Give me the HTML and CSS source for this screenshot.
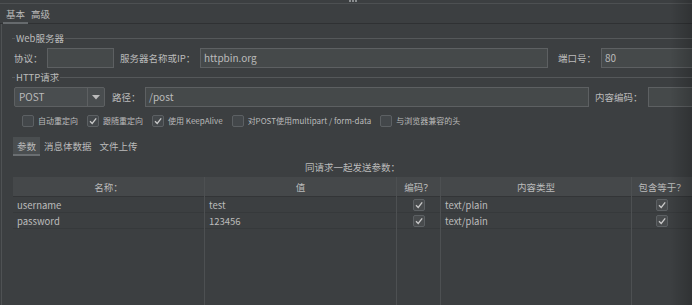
FILE: index.html
```html
<!DOCTYPE html>
<html lang="zh">
<head>
<meta charset="utf-8">
<title>HTTP请求</title>
<link rel="stylesheet" href="styles.css">
</head>
<body>
<div class="window">
  <div class="topbar"><span class="dot"></span><span class="dot"></span><span class="dot"></span></div>
  <div class="tabs">
    <div class="tab active">基本</div>
    <div class="tab">高级</div>
  </div>
  <div class="panel">
    <div class="group-title"><span>Web服务器</span></div>
    <div class="row row-server">
      <div class="lbl">协议：</div>
      <div class="input"></div>
      <div class="lbl lbl-pad6">服务器名称或IP：</div>
      <div class="input">httpbin.org</div>
      <div class="lbl lbl-pad10">端口号：</div>
      <div class="input">80</div>
    </div>
    <div class="group-title title-http"><span>HTTP请求</span></div>
    <div class="row row-request">
      <div class="select">
        <div class="select-value">POST</div>
        <div class="select-arrow"><svg width="8" height="5" viewBox="0 0 8 5"><path d="M0 0H8L4 4.5Z" fill="#bbbbbb"/></svg></div>
      </div>
      <div class="lbl lbl-pad7">路径：</div>
      <div class="input">/post</div>
      <div class="lbl lbl-pad6">内容编码：</div>
      <div class="input"></div>
    </div>
    <div class="checks">
      <div class="check-item"><span class="cb"></span><span class="check-label">自动重定向</span></div>
      <div class="check-item"><span class="cb"><svg width="10" height="10" viewBox="0 0 10 10"><path d="M2 5.2L4.2 7.5L8.2 2.3" fill="none" stroke="#c9c9c9" stroke-width="1.3"/></svg></span><span class="check-label">跟随重定向</span></div>
      <div class="check-item"><span class="cb"><svg width="10" height="10" viewBox="0 0 10 10"><path d="M2 5.2L4.2 7.5L8.2 2.3" fill="none" stroke="#c9c9c9" stroke-width="1.3"/></svg></span><span class="check-label">使用 KeepAlive</span></div>
      <div class="check-item"><span class="cb"></span><span class="check-label">对POST使用multipart / form-data</span></div>
      <div class="check-item"><span class="cb"></span><span class="check-label">与浏览器兼容的头</span></div>
    </div>
    <div class="subtabs">
      <div class="subtab active">参数</div>
      <div class="subtab">消息体数据</div>
      <div class="subtab">文件上传</div>
    </div>
    <div class="params">
      <div class="caption">同请求一起发送参数：</div>
      <div class="table">
        <div class="col col-name">
          <div class="th">名称：</div>
          <div class="td">username</div>
          <div class="td">password</div>
        </div>
        <div class="col col-value">
          <div class="th">值</div>
          <div class="td">test</div>
          <div class="td">123456</div>
        </div>
        <div class="col col-enc">
          <div class="th">编码？</div>
          <div class="td td-center"><span class="cb cb-table"><svg width="10" height="10" viewBox="0 0 10 10"><path d="M2 5.2L4.2 7.5L8.2 2.3" fill="none" stroke="#c9c9c9" stroke-width="1.3"/></svg></span></div>
          <div class="td td-center"><span class="cb cb-table"><svg width="10" height="10" viewBox="0 0 10 10"><path d="M2 5.2L4.2 7.5L8.2 2.3" fill="none" stroke="#c9c9c9" stroke-width="1.3"/></svg></span></div>
        </div>
        <div class="col col-type">
          <div class="th">内容类型</div>
          <div class="td">text/plain</div>
          <div class="td">text/plain</div>
        </div>
        <div class="col col-eq">
          <div class="th">包含等于？</div>
          <div class="td td-center"><span class="cb cb-table"><svg width="10" height="10" viewBox="0 0 10 10"><path d="M2 5.2L4.2 7.5L8.2 2.3" fill="none" stroke="#c9c9c9" stroke-width="1.3"/></svg></span></div>
          <div class="td td-center"><span class="cb cb-table"><svg width="10" height="10" viewBox="0 0 10 10"><path d="M2 5.2L4.2 7.5L8.2 2.3" fill="none" stroke="#c9c9c9" stroke-width="1.3"/></svg></span></div>
        </div>
      </div>
    </div>
  </div>
  <div class="edge-shade"></div>
</div>
</body>
</html>
```
FILE: styles.css
```css
* { box-sizing: border-box; }

body {
  margin: 0;
  background: #3c3f41;
  color: #bbbbbb;
  font-family: "Noto Sans CJK SC", Lato, sans-serif;
  font-size: 9.5px;
  width: 692px;
  height: 305px;
  overflow: hidden;
}

.window {
  position: relative;
  display: flex;
  flex-direction: column;
  height: 305px;
  overflow: hidden;
}

.topbar {
  height: 4px;
  border-bottom: 1px solid #4d5052;
  display: flex;
  justify-content: center;
  gap: 1px;
  padding-left: 14px;
}

.dot {
  width: 2px;
  height: 2px;
  background: #8a8d8f;
}

.tabs {
  display: flex;
  height: 20px;
  padding-left: 3px;
  border-bottom: 1px solid #2f3133;
}

.tab {
  padding: 1px 3px 0;
  line-height: 19px;
  height: 20px;
}

.tab.active {
  border-bottom: 2px solid #666a6d;
}

.panel {
  flex: 1;
  display: flex;
  flex-direction: column;
  margin-left: 1px;
  border-left: 1px solid #4f5254;
  min-height: 0;
}

.group-title {
  display: flex;
  align-items: center;
  height: 13px;
  margin-top: 8px;
  padding-left: 10px;
}

.group-title::before {
  content: "";
  width: 3px;
  height: 1px;
  background: #55585a;
}

.group-title::after {
  content: "";
  flex: 1;
  height: 1px;
  background: #55585a;
}

.group-title span {
  padding: 0 1px;
  line-height: 13px;
}

.title-http {
  margin-top: 3px;
}

.row {
  display: grid;
  align-items: center;
  height: 20px;
  margin-top: 3px;
  padding-left: 12px;
}

.row-server {
  grid-template-columns: 33px 67px 86px 348px 53px 110px;
}

.row-request {
  grid-template-columns: 91px 40px 444px 59px 110px;
}

.lbl {
  white-space: nowrap;
  line-height: 20px;
}

.lbl-pad6 { padding-left: 6px; }
.lbl-pad7 { padding-left: 7px; }
.lbl-pad10 { padding-left: 10px; }

.input {
  height: 20px;
  border: 1px solid #5d6062;
  background: #45494a;
  padding: 0 3px;
  line-height: 18px;
  font-size: 10px;
  white-space: nowrap;
  overflow: hidden;
}

.select {
  display: flex;
  height: 20px;
  border: 1px solid #5d6062;
  border-radius: 2px;
  background: #494d4f;
}

.select-value {
  flex: 1;
  padding-left: 4px;
  line-height: 18px;
  font-size: 10px;
}

.select-arrow {
  width: 17px;
  border-left: 1px solid #5d6062;
  display: flex;
  align-items: center;
  justify-content: center;
}

.checks {
  display: flex;
  align-items: center;
  gap: 9px;
  height: 12px;
  margin-top: 8px;
  padding-left: 20px;
}

.check-item {
  display: flex;
  align-items: center;
  gap: 4px;
}

.check-label {
  font-size: 8px;
  line-height: 12px;
  white-space: nowrap;
}

.cb {
  width: 12px;
  height: 12px;
  border: 1px solid #5c6063;
  border-radius: 2px;
  background: #43474a;
  display: flex;
  align-items: center;
  justify-content: center;
  flex: none;
}

.subtabs {
  display: flex;
  height: 19px;
  margin-top: 10px;
  padding-left: 11px;
}

.subtab {
  padding: 0 4px;
  line-height: 18px;
  height: 19px;
  white-space: nowrap;
}

.subtab.active {
  background: #4a4e50;
  border-bottom: 2px solid #6a6e71;
}

.params {
  flex: 1;
  display: flex;
  flex-direction: column;
  padding-left: 11px;
  min-height: 0;
}

.caption {
  margin-top: 5px;
  height: 13px;
  line-height: 13px;
  text-align: center;
}

.table {
  flex: 1;
  display: flex;
  margin-top: 3px;
}

.col {
  display: flex;
  flex-direction: column;
  border-right: 1px solid #4d5052;
}

.col-name { width: 192px; }
.col-value { width: 192px; }
.col-enc { width: 44px; }
.col-type { width: 191px; }
.col-eq { flex: 1; border-right: none; }

.th {
  height: 20px;
  background: #45484a;
  border-bottom: 1px solid #333537;
  text-align: center;
  line-height: 20px;
  white-space: nowrap;
}

.td {
  height: 16px;
  border-bottom: 1px solid #36393b;
  padding-left: 4px;
  line-height: 16px;
  white-space: nowrap;
}

.td-center {
  padding-left: 0;
  display: flex;
  align-items: center;
  justify-content: center;
}

.cb-table {
  width: 12px;
  height: 12px;
  background: #484b4d;
}

.edge-shade {
  position: absolute;
  top: 0;
  right: 0;
  width: 22px;
  height: 100%;
  background: linear-gradient(to right, rgba(0, 0, 0, 0), rgba(0, 0, 0, 0.2));
  pointer-events: none;
}
```
